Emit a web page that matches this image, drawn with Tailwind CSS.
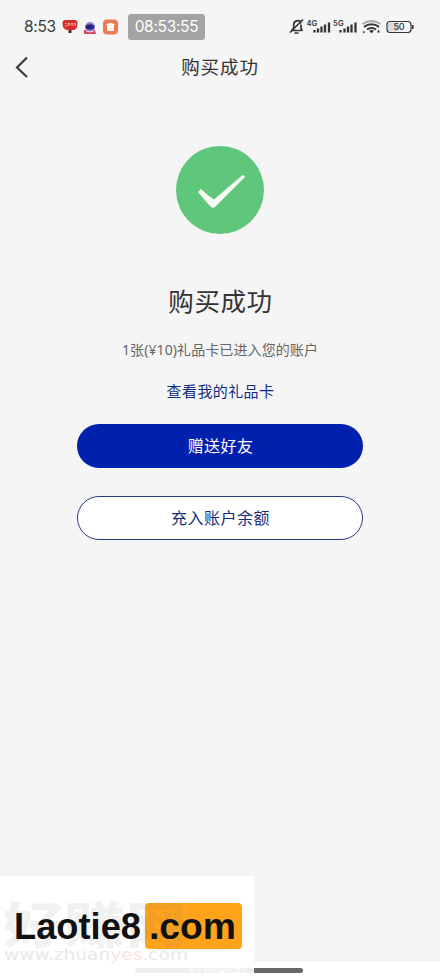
<!DOCTYPE html>
<html lang="zh-CN">
<head>
<meta charset="UTF-8">
<title>购买成功</title>
<script src="https://cdn.jsdelivr.net/npm/@tailwindcss/browser@4"></script>
</head>
<body class="bg-white">
<div class="relative flex h-[979px] w-[440px] flex-col overflow-hidden bg-white font-['Noto_Sans','Noto_Sans_CJK_SC',sans-serif] text-[#333]">
  <div class="flex h-[962px] shrink-0 flex-col bg-[#f5f5f5]">
    <header class="flex h-[40px] items-center pt-[13px] pl-6 pr-[25px]">
      <span class="w-[38px] font-[Inter,sans-serif] text-[15.5px] leading-[26px] tracking-[-0.3px] text-[#3c3c3c]">8:53</span>
      <svg class="h-[16px] w-[16px]" viewBox="0 0 16 16"><path d="M3 1h10q2.500 0 2.500 3.500 0 5.500-3.500 6.500H5Q.5 10 .5 4.500 .5 1 3 1Z" fill="#d82c2b"/><path d="M3 4.500h2M3 7h2M6 7V4.500h2V6H6M9 4.500h2M10 4.500V7M12 7V4.500h1.500V7" fill="none" stroke="#f5b9ad" stroke-width=".8"/><path d="M6.500 11h3v3h-3z" fill="#55272b"/></svg>
      <svg class="ml-[4px] h-[16px] w-[16px]" viewBox="0 0 16 16"><path d="M2 11h11l1 4H2z" fill="#d5475e"/><circle cx="8" cy="8" r="5" fill="#9185ce"/><ellipse cx="8" cy="8" rx="4.300" ry="2.700" fill="#2e247e"/><path d="M4 12q4 2 8 0" fill="none" stroke="#e8d9ee" stroke-width="1"/></svg>
      <svg class="ml-[4px] h-[16px] w-[16px]" viewBox="0 0 16 16"><rect x="1" y="0.500" width="15" height="15" rx="4" fill="#ed7956"/><path d="M5 5h2l1.500-1L10 5h2v1h-.4l-.3 5.500H5.700L5.400 6H5z" fill="#fff6ec" stroke="#fff6ec"/></svg>
      <span class="ml-[10px] flex h-[26px] w-[77px] items-center justify-center rounded-[3px] bg-[#a3a3a3] font-[Inter,sans-serif] text-[15.5px] tracking-[-0.3px] text-white">08:53:55</span>
      <svg class="ml-auto h-[20px] w-[127px] shrink-0" viewBox="288 17 127 20" fill="none" stroke="#353535">
        <path d="M291 30.500h11.500M292 30l1.700-2v-3.500c0-4 6.300-5.500 7.300-1M301 24.500v4l1.500 2M290 32.500 303 19.500M294.500 33h4" stroke-width="1.700"/>
        <g fill="#353535" stroke="none" font-family="Inter" font-size="7.500" font-weight="600"><text x="306.500" y="26" textLength="10.500">4G</text><text x="333" y="26" textLength="10.500">5G</text></g>
        <path d="M314.500 32.500v-2.500M318 32.500v-4M321.500 32.500v-6M325 32.500v-8M329 32.500v-10M340.500 32.500v-2.500M344.500 32.500v-4M348 32.500v-6M351.500 32.500v-8M355.500 32.500v-10" stroke-width="2.300"/>
        <path d="M362.500 24q9-6 18 0" stroke="#aaa" stroke-width="1.800"/>
        <path d="M364 26.800q7.500-5 15 0M367 29.500q4.500-3 9 0" stroke-width="2"/><path d="m369 30.700 2.500 2.500 2.500-2.500q-2.500-1.500-5 0ZM362.300 31.500h3l-1.500 2zM377 32.500l1.500-3 1.500 3z" fill="#353535" stroke="none"/>
        <rect x="387" y="21.500" width="24" height="11" rx="3" stroke-width="1.200"/><rect x="388" y="22.500" width="11" height="9" rx="2" fill="#d9d9d9" stroke="none"/><path d="M412.800 25v4" stroke-width="1.600"/>
        <text x="393.500" y="30.300" fill="#333" stroke="none" font-family="Inter" font-size="9" font-weight="500" textLength="11">50</text>
      </svg>
    </header>
    <nav class="relative flex h-[54px] items-center justify-center">
      <svg class="absolute left-[14px] top-[15px] h-6 w-4" viewBox="0 0 16 24" fill="none" stroke="#3c3c3c" stroke-width="2.200"><path d="M13 2.500 3 12.500l10 9.500"/></svg>
      <h1 class="text-[18.500px] leading-[26px] tracking-[0.9px]">购买成功</h1>
    </nav>
    <main class="flex flex-col items-center pt-[52px]">
      <svg class="h-[88px] w-[88px]" viewBox="0 0 88 88"><circle cx="44" cy="44" r="44" fill="#5fc77b"/><path d="M22 46 25 43Q31 49 38 53.500L66 29.500q3-1 3 1.500L39 61q-2 1.500-4 0Q29 55 22 46Z" fill="#f8fcf5"/></svg>
      <h2 class="mt-[48px] pl-px text-[25.500px] leading-[38px] tracking-[0.6px]">购买成功</h2>
      <p class="mt-[20px] text-[14px] leading-[20px] tracking-[0.1px] text-[#666]">1张(¥10)礼品卡已进入您的账户</p>
      <a class="mt-[20px] pl-px text-[15px] leading-[22px] tracking-[0.4px] text-[#102c83]">查看我的礼品卡</a>
      <button class="mt-[22px] h-[44px] w-[286px] rounded-full bg-[#0020ae] pl-px text-[16px] tracking-[0.4px] text-white">赠送好友</button>
      <button class="mt-[28px] h-[44px] w-[286px] rounded-full border border-[#263b7d] bg-white pl-px text-[16px] tracking-[0.5px] text-[#172e7c]">充入账户余额</button>
    </main>
  </div>
  <div class="absolute left-[135px] top-[968px] h-[5px] w-[168px] rounded-full bg-[#686868]"></div>
  <aside class="absolute left-0 top-[876px] h-[103px] w-[254px] overflow-hidden bg-white">
    <div class="absolute left-[145px] top-[27px] h-[46px] w-[97px] rounded-[4px] bg-[#ffa31a]"></div>
    <svg class="absolute inset-0 h-[103px] w-[254px]" viewBox="0 0 254 103">
      <text x="3" y="67" font-family="Noto Sans CJK SC" font-size="49" font-weight="900" textLength="184" lengthAdjust="spacingAndGlyphs" fill="#777" fill-opacity=".1">好赚网</text>
      <text x="4" y="84" font-family="DejaVu Sans" font-size="15" textLength="184" lengthAdjust="spacingAndGlyphs" fill="#e8e8e8">www.zhuan<tspan fill="#f9e4dc">yes</tspan>.com</text>
      <rect x="135" y="92" width="119" height="5" rx="2.500" fill="#ededed"/>
      <text x="188" y="98" font-family="Noto Sans CJK SC" font-size="7" fill="#fff" textLength="60">专注网络赚钱项目</text>
      <g font-family="Liberation Sans" font-size="37" font-weight="700" fill="#111"><text x="14" y="63" textLength="127" lengthAdjust="spacingAndGlyphs">Laotie8</text><text x="149" y="63" textLength="87" lengthAdjust="spacingAndGlyphs">.com</text></g>
    </svg>
  </aside>
</div>
</body>
</html>
